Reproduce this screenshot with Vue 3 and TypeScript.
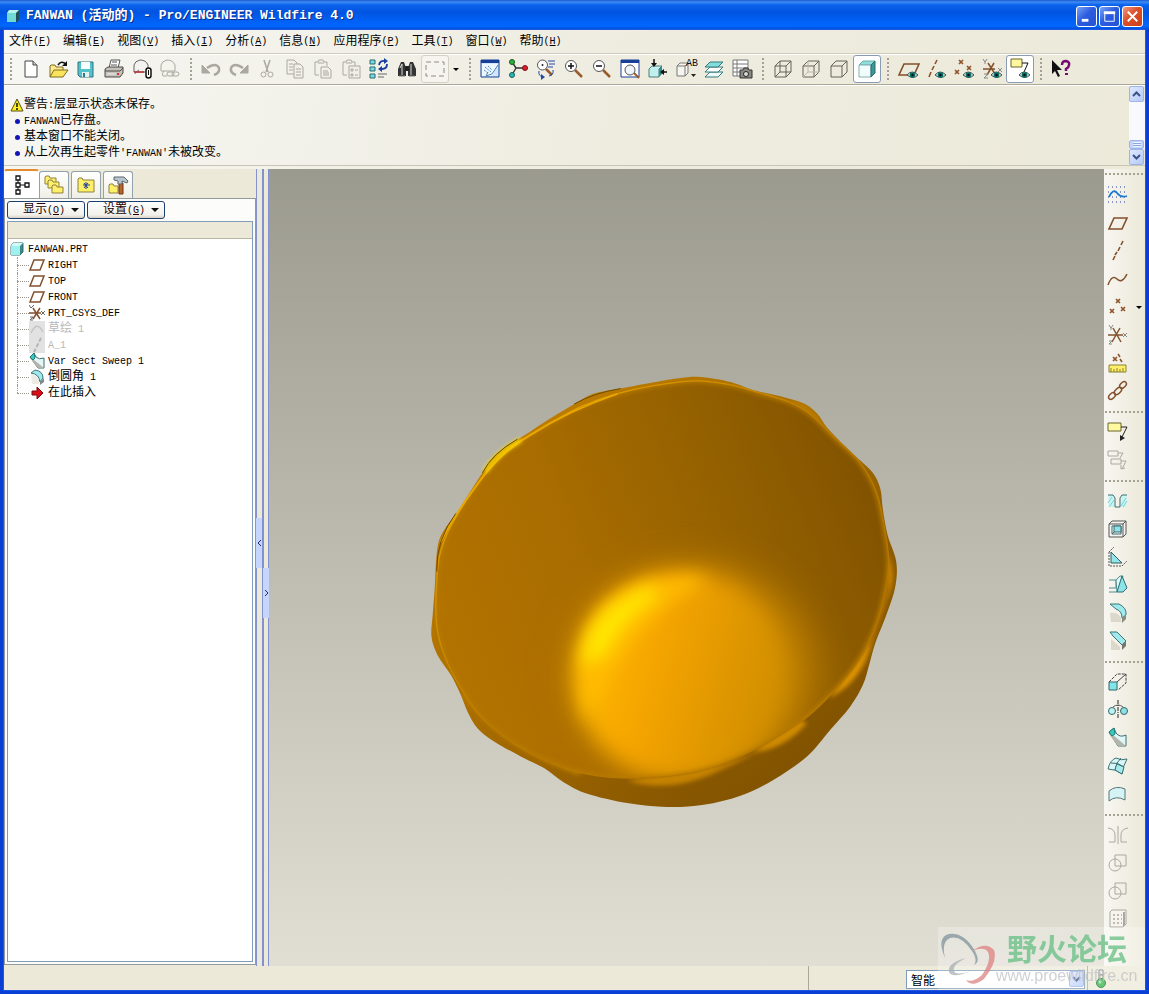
<script setup lang="ts">
import { h, ref } from 'vue'

type Run = { text: string; latin: boolean }
type Tool = { icon: string; label: string; state?: 'on' | 'off' }
type Point = [number, number]

const splitRuns = (text: string): Run[] =>
  (text.match(/[\x20-\x7e]+|[^\x20-\x7e]+/g) ?? []).map((t) => ({ text: t, latin: /^[\x20-\x7e]/.test(t) }))

const Mixed = (props: { text: string }) =>
  h('span', { class: 'mixed' }, splitRuns(props.text).map((r) => h('span', { class: r.latin ? 'latin' : 'han' }, r.text)))
Mixed.props = ['text']

const menus = [
  ['文件', 'F'], ['编辑', 'E'], ['视图', 'V'], ['插入', 'I'], ['分析', 'A'],
  ['信息', 'N'], ['应用程序', 'P'], ['工具', 'T'], ['窗口', 'W'], ['帮助', 'H'],
]

const messages = ['警告:层显示状态未保存。', 'FANWAN已存盘。', '基本窗口不能关闭。', "从上次再生起零件'FANWAN'未被改变。"]

const tree = [
  { icon: 'tPlane', name: 'RIGHT' },
  { icon: 'tPlane', name: 'TOP' },
  { icon: 'tPlane', name: 'FRONT' },
  { icon: 'tCsys', name: 'PRT_CSYS_DEF' },
  { icon: 'tCurve', name: '草绘 1', dim: true },
  { icon: 'tAxis', name: 'A_1', dim: true },
  { icon: 'tSweep', name: 'Var Sect Sweep 1' },
  { icon: 'tRound', name: '倒圆角 1' },
  { icon: 'tInsert', name: '在此插入' },
]

const topGroups: Tool[][] = [
  [
    { icon: 'new', label: '新建' }, { icon: 'open', label: '打开' }, { icon: 'save', label: '保存' },
    { icon: 'print', label: '打印' }, { icon: 'mail', label: '发送邮件' }, { icon: 'mailLink', label: '发送链接', state: 'off' },
  ],
  [
    { icon: 'undo', label: '撤消', state: 'off' }, { icon: 'redo', label: '重做', state: 'off' }, { icon: 'cut', label: '剪切', state: 'off' },
    { icon: 'copy', label: '复制', state: 'off' }, { icon: 'paste', label: '粘贴', state: 'off' }, { icon: 'pasteSpecial', label: '选择性粘贴', state: 'off' },
    { icon: 'regen', label: '再生' }, { icon: 'find', label: '查找' }, { icon: 'box', label: '选取框', state: 'off' },
  ],
  [
    { icon: 'repaint', label: '重画' }, { icon: 'spin', label: '旋转中心' }, { icon: 'orient', label: '定向模式' },
    { icon: 'zoomIn', label: '放大' }, { icon: 'zoomOut', label: '缩小' }, { icon: 'refit', label: '重新调整' },
    { icon: 'reorient', label: '重定向' }, { icon: 'views', label: '已命名视图' }, { icon: 'layers', label: '层' }, { icon: 'viewMgr', label: '视图管理器' },
  ],
  [
    { icon: 'wire', label: '线框' }, { icon: 'hidden', label: '隐藏线' }, { icon: 'noHidden', label: '无隐藏线' }, { icon: 'shade', label: '着色', state: 'on' },
  ],
  [
    { icon: 'planeEye', label: '基准平面显示' }, { icon: 'axisEye', label: '基准轴显示' }, { icon: 'pointEye', label: '基准点显示' },
    { icon: 'csysEye', label: '坐标系显示' }, { icon: 'noteEye', label: '注释显示', state: 'on' },
  ],
  [{ icon: 'help', label: '上下文帮助' }],
]

const sideGroups: Tool[][] = [
  [
    { icon: 'sketch', label: '草绘' }, { icon: 'plane', label: '平面' }, { icon: 'axis', label: '轴' }, { icon: 'curve', label: '曲线' },
    { icon: 'points', label: '点' }, { icon: 'csys', label: '坐标系' }, { icon: 'analysis', label: '分析特征' }, { icon: 'chain', label: '参照' },
  ],
  [{ icon: 'note', label: '注释' }, { icon: 'noteProp', label: '传播注释', state: 'off' }],
  [
    { icon: 'hole', label: '孔' }, { icon: 'shell', label: '壳' }, { icon: 'rib', label: '筋' },
    { icon: 'draft', label: '拔模' }, { icon: 'round', label: '倒圆角' }, { icon: 'chamfer', label: '倒角' },
  ],
  [
    { icon: 'extrude', label: '拉伸' }, { icon: 'revolve', label: '旋转' }, { icon: 'sweep', label: '可变截面扫描' },
    { icon: 'blend', label: '边界混合' }, { icon: 'style', label: '造型' },
  ],
  [
    { icon: 'mirror', label: '镜像', state: 'off' }, { icon: 'merge', label: '合并', state: 'off' },
    { icon: 'trim', label: '修剪', state: 'off' }, { icon: 'pattern', label: '阵列', state: 'off' },
  ],
]

const eye = '<path d="M11 18q5-6 11 0q-5 5-11 0z" fill="#cfe3dc" stroke="#34564e"/><circle cx="16.500" cy="18" r="2.800" fill="#0b6b62"/><circle cx="16.500" cy="18" r="1.200" fill="#012"/>'
const cube = '<path d="M4 9h11v11H4zM4 9l5-5h11v11l-5 5M15 9l5-5" fill="none" stroke="#666257"/>'
const clip = '<path d="M4 5h3l1-2h4l1 2h3v4M4 5v13h4"/><path d="M7 6h6"/>'
const lens = '<path d="M13 13l7 7" stroke="#9a5b2a" stroke-width="2.500"/><circle cx="9" cy="9" r="5.500" fill="#fff" stroke="#555"/>'
const planeShape = '<path d="M8 7h15l-5 11H3z" fill="none" stroke="#83502c" stroke-width="1.600"/>'
const cross = (x: number, y: number) => `<path d="M${x - 2} ${y - 2}l4 4m0-4l-4 4" stroke="#8f5127" stroke-width="1.600"/>`
const folder = (x: number, y: number, w = 11, t = 8) =>
  `<path d="M${x} ${y + t}V${y + 1}l1-1h3l1 2h${w - 5}v${t - 2}z" fill="#fff06a" stroke="#8e8140"/>`

const icons: Record<string, string> = {
  new: '<path d="M7 4h8l4 4v12H7z" fill="#fff" stroke="#444"/><path d="M15 4v4h4" fill="#ccc" stroke="#444"/>',
  open: '<path d="M4 20V9l1-1h4l1 2h7v3" fill="#ffe98a" stroke="#7c6d22"/><path d="M4 20l4-7h14l-5 7z" fill="#fbe45c" stroke="#7c6d22"/><path d="M12 8q3-5 8-1" fill="none" stroke="#111" stroke-width="1.500"/><path d="M21 4v5h-5z" fill="#111"/>',
  save: '<path d="M4 5h15v15H6l-2-2z" fill="#52c3cc" stroke="#30737c"/><path d="M7 5h9v7H7z" fill="#f8fdfd"/><path d="M8 15h7v5H8z" fill="#e7eeee"/><path d="M9 16h2v4H9z" fill="#287b86"/>',
  print: '<path d="M7 11l2-8h9l-2 8z" fill="#fff" stroke="#555"/><path d="M10 5h5M9 8h6" stroke="#555"/><path d="M3 12l3-2h15v6l-3 4H3z" fill="#c4c1ba" stroke="#4c4a45"/><path d="M5 17h9" stroke="#eee"/><path d="M15 17h2" stroke="#d32" stroke-width="2"/><path d="M3 14h15l3-3" fill="none" stroke="#4c4a45"/>',
  mail: '<path d="M4 15V8q1-4 6-5 6 0 8 5v7z" fill="#f4f2f1" stroke="#666"/><path d="M9 13q-4 2-4 4" stroke="#777" fill="none"/><path d="M4 15h10" stroke="#b33" stroke-width="1.500"/><rect x="16" y="11" width="5" height="10" rx="2.500" fill="#fff" stroke="#111" stroke-width="1.500"/><path d="M18.500 13v5" stroke="#111"/>',
  mailLink: '<path d="M3 14V8q1-4 6-5 6 0 8 5v6z"/><path d="M6 14q-3 3-1 5h4"/><rect x="9" y="15" width="7" height="4" rx="2"/><rect x="14" y="15" width="7" height="4" rx="2"/>',
  undo: '<path d="M8 11q9-6 12 0 1 5-5 7" stroke-width="2.500"/><path d="M3 8v8h8z" fill="#aaa8a0"/>',
  redo: '<path d="M16 11q-9-6-12 0-1 5 5 7" stroke-width="2.500"/><path d="M21 8v8h-8z" fill="#aaa8a0"/>',
  cut: '<path d="M9 3l4 12M15 3l-4 12" stroke-width="1.500"/><circle cx="8.500" cy="17.500" r="2.500"/><circle cx="15.500" cy="17.500" r="2.500"/>',
  copy: '<path d="M4 3h7l3 3v11H4zM6 7h4M6 10h4M6 13h4"/><path d="M11 7h6l3 3v11h-9z" fill="#f1efe6"/><path d="M13 12h5M13 15h5M13 18h5"/>',
  paste: `${clip}<path d="M10 10h7l3 3v8H10z" fill="#f1efe6"/><path d="M12 14h5M12 16h6M12 18h6"/>`,
  pasteSpecial: `${clip}<path d="M10 9h11v12H10z" fill="#f1efe6"/><path d="M12 12h2v2h-2zM16 13h3M12 17h2v2h-2zM16 18h3"/>`,
  regen: '<path d="M3 3h5v4H3zM3 10h5v4H3zM3 17h5v4H3z" fill="#7fd8da" stroke="#256d72"/><path d="M12 8q1-5 6-4M20 7q0 5-5 5" fill="none" stroke="#1b3fa0" stroke-width="1.800"/><path d="M17 1l4 3-4 3zM15 9v6l-4-3z" fill="#1b3fa0"/><path d="M11 17h9M11 20h6" stroke="#666"/>',
  find: '<path d="M3 19v-7l3-7h3l2 6v8zM13 19v-8l2-6h3l3 7v7z" fill="#333"/><path d="M10 9h4v5h-4z" fill="#222"/><path d="M5 11l2-4v11M16 7v11" stroke="#ddd" fill="none"/><path d="M4 19h6M14 19h6" stroke="#777"/>',
  box: '<path d="M3 5h18v14H3z" stroke="#8d8a80" stroke-dasharray="5 3"/>',
  repaint: '<path d="M3 3h18v17H3z" fill="#cfe8ff" stroke="#163f97"/><path d="M3 3h18v3H3z" fill="#163f97"/><path d="M4 7h16L14 19H4z" fill="#edf7ff"/><path d="M20 8l-6 9-6 2 2-4" fill="none" stroke="#5184b4"/><path d="M7 10l6 5M6 13l4 3M10 9l4 4" stroke="#4d87bb" stroke-dasharray="2 1"/>',
  spin: '<path d="M6 5l4 6h9M10 11l-4 7" stroke="#333" fill="none" stroke-width="1.400"/><circle cx="6" cy="5" r="2.500" fill="#2eae3b" stroke="#165a1d"/><circle cx="19" cy="11" r="2.500" fill="#d8222b" stroke="#7d0e13"/><circle cx="6" cy="18" r="2.500" fill="#2bb7b1" stroke="#12625f"/>',
  orient: '<path d="M12 12l6 6" stroke="#9a5b2a" stroke-width="2.500"/><circle cx="8.500" cy="8" r="5" fill="#fff" stroke="#555"/><circle cx="8.500" cy="8" r="1" fill="#222"/><path d="M14 4h7M15 7h6M14 10h5M5 14q-1 5 4 6M15 19q5-1 4-6" stroke="#2348a6" fill="none"/><path d="M7 17l4 3-4 3z" fill="#2348a6"/>',
  zoomIn: `${lens}<path d="M6 9h6M9 6v6" stroke="#111" stroke-width="1.500"/>`,
  zoomOut: `${lens}<path d="M6 9h6" stroke="#111" stroke-width="1.500"/>`,
  refit: '<path d="M3 3h18v17H3z" fill="#fff" stroke="#163f97"/><path d="M3 3h18v3H3z" fill="#163f97"/><path d="M16 16l5 5" stroke="#9a5b2a" stroke-width="2"/><circle cx="12" cy="13" r="5" fill="#eef6fb" stroke="#555"/>',
  reorient: '<path d="M3 12l3-3h10l-3 3v8H3z" fill="#bff0ee" stroke="#4e7d7d"/><path d="M13 12l3-3v8l-3 3z" fill="#2c8d92"/><path d="M8 2v5M21 15h-5" stroke="#111" stroke-width="1.500"/><path d="M5 6h6l-3 4zM18 12v6l-4-3z" fill="#111"/>',
  views: '<path d="M3 9l3-3h8v10l-3 3H3z" fill="#f6f5ef" stroke="#777"/><path d="M3 9h8v10M11 9l3-3" stroke="#777" fill="none"/><text x="12" y="9" font-family="Liberation Mono" font-size="10" fill="#111">AB</text><path d="M17 17h5l-2.500 3z" fill="#222"/>',
  layers: '<path d="M3 20l5-5h13l-5 5z" fill="#eefafa" stroke="#33797b"/><path d="M3 15l5-5h13l-5 5z" fill="#fff" stroke="#33797b"/><path d="M3 10l5-5h13l-5 5z" fill="#83dcdd" stroke="#33797b"/>',
  viewMgr: '<path d="M3 3h15v16H3zM3 7h15M3 11h15M3 15h15M7 3v16" fill="#fff" stroke="#777"/><path d="M10 13h3l1-2h4l1 2h3v8H10z" fill="#8b8882" stroke="#333"/><circle cx="16" cy="17" r="2.500" fill="#ddd" stroke="#222"/>',
  wire: `${cube}<path d="M9 4v11h11M9 15l-5 5" fill="none" stroke="#666257"/>`,
  hidden: `${cube}<path d="M9 4v11h11M9 15l-5 5" fill="none" stroke="#bbb8ac"/>`,
  noHidden: cube,
  shade: '<path d="M4 8l4-4h12l-4 4z" fill="#8fdedc" stroke="#66adad"/><path d="M4 8h12v12H4z" fill="#f1fdfc" stroke="#84b0b0"/><path d="M16 8l4-4v12l-4 4z" fill="#3c9699" stroke="#286d70"/>',
  planeEye: planeShape + eye,
  axisEye: `<path d="M13 3l-2 4M10 9l-2 4M7 15l-2 5" stroke="#8f5127" stroke-width="1.600"/>${eye}`,
  pointEye: cross(9, 5) + cross(5, 15) + cross(17, 11) + eye,
  csysEye: `<path d="M3 12h12M14 6L7 18M8 6l7 11" stroke="#83502c" stroke-width="1.500"/><path d="M3 2l2 3 2-3M5 5v2M4 17h4l-4 4h4M18 11l4 4m0-4l-4 4" stroke="#888" fill="none"/>${eye}`,
  noteEye: `<path d="M3 2h11v8H3z" fill="#fff6a0" stroke="#67642b"/><path d="M14 6h6l-4 9" fill="none" stroke="#111"/>${eye}`,
  help: '<path d="M3 3v14l3-3 3 6 2-1-3-6h5z" fill="#111"/><path d="M13 8q0-4 4-4 4 1 3 4 0 2-3 4v2" fill="none" stroke="#750b70" stroke-width="2.500"/><path d="M16 16h3v2h-3z" fill="#750b70"/>',
  sketch: '<path d="M2 4h19M2 9h19M2 14h19M2 19h19" stroke="#2338a0" stroke-dasharray="1 3"/><path d="M3 14q4-9 8-4 4 5 10 3" fill="none" stroke="#187bd1" stroke-width="1.800"/>',
  plane: '<path d="M8 7h13l-5 11H3z" fill="none" stroke="#83502c" stroke-width="1.600"/>',
  axis: '<path d="M17 2l-2 4M14 8l-2 4M11 13l-2 3M9 17l-2 4" stroke="#83502c" stroke-width="1.600"/>',
  curve: '<path d="M2 18q4-11 9-6t10-5" fill="none" stroke="#83502c" stroke-width="1.500"/>',
  points: cross(12, 6) + cross(6, 16) + cross(17, 14),
  csys: '<path d="M2 12h15M14 5L6 19M7 5l8 14" stroke="#83502c" stroke-width="1.500"/><path d="M3 2l2 3 2-3M5 5v2M3 18h3l-3 3h3M17 10l4 4m0-4l-4 4" stroke="#888" fill="none"/>',
  analysis: `${cross(9, 8)}<path d="M12 3l2 3M14 8l2 3" stroke="#83502c" stroke-width="1.500"/><path d="M3 14h17v7H3z" fill="#fff06a" stroke="#8c8030"/><path d="M5 21v-4M8 21v-3M11 21v-4M14 21v-3M17 21v-4" stroke="#8c8030"/>`,
  chain: '<g fill="none" stroke="#83502c" stroke-width="1.500"><ellipse cx="6" cy="17" rx="4" ry="2.500" transform="rotate(-45 6 17)"/><ellipse cx="12" cy="12" rx="4.500" ry="2.500" transform="rotate(-45 12 12)"/><ellipse cx="17" cy="6" rx="4" ry="2.500" transform="rotate(-45 17 6)"/></g>',
  note: '<path d="M2 3h13v8H2z" fill="#fff9a0" stroke="#67642b"/><path d="M15 7h6l-6 12" fill="none" stroke="#222"/><path d="M14 15v6l5-3z" fill="#222"/>',
  noteProp: '<path d="M2 3h10v5H2zM12 5h5l-3 5M5 11h10v5H5zM15 13h5l-4 8M15 17v4l4-1"/>',
  hole: '<path d="M2 6h5l2 12H3zM21 6h-5l-2 12h6z" fill="#c9f4f4"/><path d="M2 6h5l2 3v9h5V9l2-3h5" fill="none" stroke="#416c70"/><path d="M2 14l4-6M3 18l5-7M15 17l5-8M17 18l4-6" stroke="#6fd6dc"/>',
  shell: '<path d="M3 7l3-3h14v13l-3 3H3z" fill="#f4f4f0" stroke="#555"/><path d="M3 7h14v13M17 7l3-3" fill="none" stroke="#555"/><path d="M6 9h9v8H6z" fill="#fff" stroke="#39666a"/><path d="M8 9h7v6H8z" fill="#8ce4e8" stroke="#39666a"/><path d="M6 17l2-2" stroke="#39666a"/>',
  rib: '<path d="M5 7v11h11z" fill="#92e5e8" stroke="#2f5f63"/><path d="M3 7v14h13M3 7l5-5M16 21l5-5" fill="none" stroke="#555" stroke-dasharray="2 1"/>',
  draft: '<path d="M3 7h7v8H3M3 19h8" fill="none" stroke="#4c8d90"/><path d="M10 7l4-4h3l-6 16z" fill="#def8f8" stroke="#4c8d90"/><path d="M11 19l5-16 5 12-4 4z" fill="#8ce4e8" stroke="#2f6c70"/>',
  round: '<path d="M4 3h9q8 4 7 11l-4 3q0-7-6-9z" fill="#9de9ec" stroke="#3f7478"/><path d="M16 17l4-3v4l-4 4z" fill="#8a8a80"/><path d="M4 12q8-1 11 5v4H5z" fill="#dcd8cb"/>',
  chamfer: '<path d="M4 3h7l9 9-4 4-9-9z" fill="#9de9ec" stroke="#3f7478"/><path d="M16 16l4-4v5l-4 4z" fill="#77776e"/><path d="M5 10l9 8v3H5z" fill="#dcd8cb"/>',
  extrude: '<path d="M3 12h8v8H3z" fill="#7fe5e8" stroke="#39666a"/><path d="M3 12l8-8h9v9l-8 7" fill="none" stroke="#444" stroke-dasharray="3 1"/><path d="M11 12l9-8" stroke="#444"/>',
  revolve: '<circle cx="6" cy="13" r="3.500" fill="#baf1f2" stroke="#39666a"/><circle cx="18" cy="13" r="3.500" fill="#8be0e4" stroke="#39666a"/><path d="M7 9q5-4 10 0" fill="none" stroke="#555"/><path d="M12 2v19" stroke="#222" stroke-dasharray="4 1 1 1"/>',
  sweep: '<path d="M3 6l5-4 2 5q4 5 10 2v11h-8z" fill="#dff7f7" stroke="#3c7174"/><path d="M3 8l4 1 13 11h-8z" fill="#b3b5ac"/><path d="M3 6l5-4 1 6-3 2z" fill="#39cbc2" stroke="#1d7c76"/>',
  blend: '<path d="M2 15q2-9 8-11 5 3 11 1-4 7-5 15-6-5-14-5z" fill="#d8f6f7" stroke="#3c7174"/><path d="M9 16q1-8 6-12M5 9q7-1 13 4" fill="none" stroke="#3c7174"/><path d="M9 16q1-4 2-6l7 3-2 7z" fill="#a5eaed" stroke="#3c7174"/>',
  style: '<path d="M3 19V9q7-6 16-2v11q-9-5-16 1z" fill="#d5f3f4" stroke="#55777a"/>',
  mirror: '<path d="M12 3v18M2 5q7 1 7 7v7H3M22 5q-7 1-7 7v7h6"/>',
  merge: '<circle cx="9" cy="14" r="6"/><path d="M9 4h11v11H9z"/>',
  trim: '<circle cx="9" cy="14" r="6"/><path d="M9 4h11v11H9z"/>',
  pattern: '<path d="M4 5l2-2h14v14l-3 3H4z" fill="#f6f4ec"/><path d="M18 5v14" stroke-width="2"/><path d="M7 8h9M7 12h9M7 16h9" stroke-width="1.500" stroke-dasharray="2 2"/>',
}

const treeIcons: Record<string, string> = {
  tPlane: '<path d="M5 3h10l-4 10H1z" fill="none" stroke="#83502c" stroke-width="1.500"/>',
  tCsys: '<path d="M0 8h12M11 3L4 14M4 3l7 11" stroke="#83502c" stroke-width="1.500"/><path d="M0 0l2 3 3-3M1 12h3l-3 3h3M12 6l4 4m0-4l-4 4" stroke="#666" fill="none"/>',
  tCurve: '<path d="M0 0h16v16H0z" fill="#e2e2e2"/><path d="M2 12q6-13 12-1" fill="none" stroke="#c4c4c4" stroke-width="1.500"/>',
  tAxis: '<path d="M0 0h16v16H0z" fill="#e2e2e2"/><path d="M12 1L5 15" stroke="#b6b6b6" stroke-width="2" stroke-dasharray="4 2"/>',
  tSweep: '<path d="M1 4l4-4 2 4q3 3 8 1v10H9z" fill="#e3f7f7" stroke="#3c7174"/><path d="M1 5l3 1 11 9H9z" fill="#b3b5ac"/><path d="M1 4l4-4 1 5-2 2z" fill="#39cbc2" stroke="#1d7c76"/>',
  tRound: '<path d="M2 4l4-3q8 1 8 8l-3 4q-1-8-9-9z" fill="#9de9ec" stroke="#3f7478"/><path d="M11 13l4-4v4l-4 3z" fill="#888"/><path d="M2 5q7 1 8 8v2H3z" fill="#ecebe5"/>',
  tInsert: '<path d="M3 6h5V2l6 6-6 6v-4H3z" fill="#d80f18" stroke="#7b0a0e"/>',
}

const tabs = [
  { label: '模型树', art: '<path d="M5 2h4v4H5zM5 9h4v4H5zM5 16h4v4H5zM14 9h4v4h-4z" fill="#fff" stroke="#111" stroke-width="1.300"/><path d="M7 6v3M7 13v3M9 11h5" stroke="#111"/>' },
  { label: '文件夹浏览器', art: folder(2, 2) + folder(5, 6) + folder(9, 11) },
  { label: '收藏夹', art: `${folder(3, 4, 16, 14)}<path d="M11 8v7M8 11h7M9 9l4 5M13 9l-4 5" stroke="#1c3e9c"/>` },
  { label: '连接', art: `${folder(2, 10, 9, 9)}<path d="M12 9h4v11h-4z" fill="#b8652c" stroke="#6f3712"/><path d="M7 3h10l4 4-1 2-5-2v3h-4V7L7 6z" fill="#b9c6cc" stroke="#5c686e"/>` },
]

// Closed Catmull-Rom curve through the given points.
function closedCurve(points: Point[]): string {
  const n = points.length
  const at = (i: number) => points[(i + n) % n]
  let d = `M${at(0)[0]} ${at(0)[1]}`
  for (let i = 0; i < n; i++) {
    const [a, b, c, e] = [at(i - 1), at(i), at(i + 1), at(i + 2)]
    d += `C${b[0] + (c[0] - a[0]) / 6} ${b[1] + (c[1] - a[1]) / 6} ${c[0] - (e[0] - b[0]) / 6} ${c[1] - (e[1] - b[1]) / 6} ${c[0]} ${c[1]}`
  }
  return d + 'Z'
}

const outer = closedCurve([
  [840, 50], [930, 65], [1000, 90], [1080, 108], [1150, 130], [1190, 160], [1225, 208], [1300, 283], [1355, 335], [1380, 385],
  [1388, 450], [1402, 525], [1428, 605], [1425, 680], [1400, 760], [1365, 850], [1348, 910], [1328, 975], [1290, 1040], [1230, 1110],
  [1160, 1190], [1060, 1260], [960, 1308], [850, 1335], [740, 1342], [620, 1330], [500, 1302], [430, 1268], [370, 1225], [300, 1190],
  [220, 1145], [170, 1105], [140, 1055], [120, 1005], [90, 945], [50, 885], [32, 830], [36, 760], [42, 680], [46, 600],
  [55, 540], [80, 495], [108, 460], [145, 400], [185, 338], [215, 292], [260, 255], [310, 226], [380, 180], [460, 132],
  [520, 100], [600, 85], [700, 66], [780, 53],
])
const inner = closedCurve([
  [830, 62], [930, 74], [1010, 96], [1100, 123], [1170, 162], [1240, 230], [1320, 308], [1368, 395], [1392, 500], [1405, 600],
  [1394, 700], [1360, 815], [1310, 910], [1240, 995], [1150, 1080], [1020, 1160], [900, 1215], [780, 1245], [640, 1255], [500, 1243],
  [380, 1205], [270, 1145], [180, 1070], [120, 985], [72, 890], [48, 800], [46, 700], [54, 600], [75, 530], [109, 465],
  [150, 400], [200, 332], [250, 278], [312, 234], [400, 182], [480, 139], [580, 103], [700, 76],
])

const filter = ref('智能')
</script>

<template>
  <div class="window">
    <header class="title-bar">
      <svg class="app-icon" viewBox="0 0 14 14"><path d="M1 3l2-2h10v10l-2 2H1z" fill="#1e4c58" /><path d="M1 4h9v9H1z" fill="#6fd9d4" /><path d="M1 4l2-3h10l-3 3z" fill="#b5f3ef" /></svg>
      <h1>FANWAN (<span class="han">活动的</span>) - Pro/ENGINEER Wildfire 4.0</h1>
      <div class="caption">
        <button type="button" aria-label="最小化"><svg viewBox="0 0 20 20"><path d="M5 14h7" stroke="#fff" stroke-width="3" /></svg></button>
        <button type="button" aria-label="最大化"><svg viewBox="0 0 20 20"><path d="M5 6h10v9H5z" fill="none" stroke="#fff" /><path d="M4 6h12" stroke="#fff" stroke-width="3" /></svg></button>
        <button type="button" aria-label="关闭" class="close"><svg viewBox="0 0 20 20"><path d="M5 5l10 10M15 5L5 15" stroke="#fff" stroke-width="2" /></svg></button>
      </div>
    </header>

    <div class="client">
      <nav class="menu-bar">
        <button v-for="[name, key] in menus" :key="key" type="button">{{ name }}<span class="latin">(<u>{{ key }}</u>)</span></button>
      </nav>

      <div class="tool-bar" role="toolbar">
        <template v-for="(group, g) in topGroups" :key="g">
          <i class="grip"></i>
          <button v-for="tool in group" :key="tool.icon" type="button" class="tool" :class="[tool.state, tool.icon]" :aria-label="tool.label">
            <svg viewBox="0 0 24 24" v-html="icons[tool.icon]"></svg>
          </button>
          <button v-if="g === 1" type="button" class="more" aria-label="选取选项"></button>
        </template>
      </div>

      <section class="messages">
        <ul>
          <li v-for="(message, i) in messages" :key="message">
            <svg v-if="i === 0" class="warn" viewBox="0 0 14 14"><path d="M7 1l6 12H1z" fill="#ffef1f" stroke="#55500c" stroke-linejoin="round" /><path d="M7 5v4M7 10v2" stroke="#111" stroke-width="1.500" /></svg>
            <i v-else class="dot"></i>
            <Mixed :text="message" />
          </li>
        </ul>
        <div class="scroll">
          <button type="button" aria-label="向上滚动"><svg viewBox="0 0 9 6"><path d="M1 5l3.500-3.500L8 5" /></svg></button>
          <span class="track"><i class="thumb"></i></span>
          <button type="button" aria-label="向下滚动"><svg viewBox="0 0 9 6"><path d="M1 1l3.500 3.500L8 1" /></svg></button>
        </div>
      </section>

      <main class="work">
        <aside class="navigator">
          <div class="tabs" role="tablist">
            <button v-for="(tab, i) in tabs" :key="tab.label" type="button" role="tab" :aria-label="tab.label" :class="{ current: i === 0 }">
              <svg viewBox="0 0 22 22" v-html="tab.art"></svg>
            </button>
          </div>
          <div class="page">
            <div class="page-buttons">
              <button type="button">显示<span class="latin">(<u>O</u>)</span><i></i></button>
              <button type="button">设置<span class="latin">(<u>G</u>)</span><i></i></button>
            </div>
            <div class="tree-box">
              <div class="tree-head"></div>
              <div class="root">
                <svg viewBox="0 0 14 14"><path d="M1 4l2-3h10v9l-3 3H1z" fill="#37878b" stroke="#3c7174" /><path d="M1 4h9v9H1z" fill="#9ff1ef" /><path d="M1 4l2-3h10l-3 3z" fill="#d2faf8" /></svg>
                <Mixed text="FANWAN.PRT" />
              </div>
              <ul class="tree">
                <li v-for="node in tree" :key="node.name" :class="{ dim: node.dim }">
                  <svg viewBox="0 0 16 16" v-html="treeIcons[node.icon]"></svg>
                  <Mixed :text="node.name" />
                </li>
              </ul>
            </div>
          </div>
        </aside>

        <div class="sash left"><button type="button" aria-label="折叠导航器"><svg viewBox="0 0 6 8"><path d="M4 1L1 4l3 3" /></svg></button></div>
        <div class="sash right"><button type="button" aria-label="展开浏览器"><svg viewBox="0 0 6 8"><path d="M2 1l3 3-3 3" /></svg></button></div>

        <section class="viewport">
          <svg viewBox="268 169 836 797" role="img" aria-label="FANWAN">
            <defs>
              <linearGradient id="wall" x1="0" y1=".65" x2="1" y2=".3">
                <stop offset="0" stop-color="#b37300" /><stop offset=".35" stop-color="#a86c00" /><stop offset=".7" stop-color="#936000" /><stop offset="1" stop-color="#815200" />
              </linearGradient>
              <linearGradient id="skin" x1="0" y1="0" x2="1" y2="1">
                <stop offset="0" stop-color="#c88400" /><stop offset=".45" stop-color="#a86c00" /><stop offset=".75" stop-color="#885700" /><stop offset="1" stop-color="#7a4e00" />
              </linearGradient>
              <linearGradient id="floor" x1="0" y1=".3" x2="1" y2=".55">
                <stop offset="0" stop-color="#ffbc00" /><stop offset=".35" stop-color="#f6a600" /><stop offset=".65" stop-color="#e39900" /><stop offset="1" stop-color="#cf8d00" />
              </linearGradient>
              <linearGradient id="rim" x1="0" y1="0" x2="1" y2="1">
                <stop offset="0" stop-color="#f3b000" /><stop offset=".5" stop-color="#b87a00" /><stop offset="1" stop-color="#b27500" />
              </linearGradient>
              <filter id="wide" x="-30%" y="-30%" width="160%" height="160%"><feGaussianBlur stdDeviation="50" /></filter>
              <filter id="soft" x="-30%" y="-30%" width="160%" height="160%"><feGaussianBlur stdDeviation="34" /></filter>
              <filter id="mid" x="-40%" y="-40%" width="180%" height="180%"><feGaussianBlur stdDeviation="24" /></filter>
              <filter id="fine" x="-30%" y="-30%" width="160%" height="160%"><feGaussianBlur stdDeviation="7" /></filter>
              <clipPath id="inside"><path :d="inner" /></clipPath>
              <clipPath id="body"><path :d="outer" /></clipPath>
            </defs>
            <g transform="translate(420 360) scale(.33333)">
              <path :d="outer" fill="url(#skin)" />
              <g clip-path="url(#body)">
                <g filter="url(#fine)">
                  <path d="M620 1262Q740 1300 870 1245Q960 1205 1010 1175L900 1215Z" fill="#c58200" />
                  <path d="M990 1180Q1090 1170 1160 1090L1140 1080Z" fill="#cf8a00" />
                  <path d="M1225 1015Q1310 975 1345 880L1365 820L1310 905Z" fill="#dc9200" />
                  <path d="M1400 590Q1430 650 1395 720L1350 850L1405 690Z" fill="#c68200" stroke="#c68200" stroke-width="8" />
                  <path d="M1110 115Q1170 130 1210 200L1250 240L1160 160Z" fill="#b87a00" stroke="#b87a00" stroke-width="8" />
                  <path d="M130 1000Q180 1070 260 1130Q340 1190 480 1240" fill="none" stroke="#bd7d00" stroke-width="16" />
                </g>
              </g>
              <path :d="inner" fill="url(#wall)" />
              <g clip-path="url(#inside)">
                <ellipse cx="810" cy="930" rx="380" ry="330" fill="#b87a00" filter="url(#wide)" />
                <ellipse cx="785" cy="950" rx="325" ry="315" fill="url(#floor)" filter="url(#soft)" />
                <path d="M500 1060Q450 780 640 690Q730 650 850 660Q640 750 500 1060Z" fill="#ffbb00" stroke="#ffbb00" stroke-width="16" filter="url(#mid)" />
                <path d="M505 890Q520 760 700 695Q590 770 545 870Z" fill="#ffe600" stroke="#ffe600" stroke-width="36" filter="url(#mid)" />
                <path :d="inner" fill="none" stroke="#b87a00" stroke-width="12" filter="url(#fine)" />
              </g>
              <path :d="inner" fill="none" stroke="url(#rim)" stroke-width="4" />
              <path d="M60 545Q100 465 190 346Q250 270 330 224Q450 148 590 101" fill="none" stroke="#e8a600" stroke-width="6" />
              <path d="M192 335Q230 275 300 240" fill="none" stroke="#ffe200" stroke-width="12" filter="url(#fine)" />
              <path d="M48 635Q45 540 105 460M185 338Q215 280 290 237M460 132Q520 98 600 85" fill="none" stroke="#6d4a00" stroke-width="3" />
            </g>
          </svg>
        </section>

        <div class="side-bar" role="toolbar">
          <template v-for="(group, g) in sideGroups" :key="g">
            <i class="grip"></i>
            <div v-for="tool in group" :key="tool.icon" class="side-row">
              <button type="button" class="tool" :class="tool.state" :aria-label="tool.label">
                <svg viewBox="0 0 24 24" v-html="icons[tool.icon]"></svg>
              </button>
              <button v-if="tool.icon === 'points'" type="button" class="more" aria-label="更多点工具"></button>
            </div>
          </template>
        </div>
      </main>

      <footer class="status">
        <div class="status-filter">
          <label>
            <select v-model="filter" aria-label="选取过滤器"><option>智能</option></select>
            <span class="drop"><svg viewBox="0 0 9 6"><path d="M1 1l3.500 3.500L8 1" /></svg></span>
          </label>
        </div>
        <div class="status-light">
          <svg viewBox="0 0 14 20"><path d="M5 1h4v5H5z" fill="#eee" stroke="#777" /><path d="M5 6h4v5H5z" fill="#e3efae" stroke="#777" /><circle cx="7" cy="14" r="4.500" fill="#37b34a" stroke="#1b6f2a" /><circle cx="6" cy="13" r="1.500" fill="#9fe3a8" /></svg>
        </div>
      </footer>
    </div>

    <div class="watermark">
      <svg viewBox="0 0 60 56">
        <path d="M7 29Q-2 8 11 5Q26 3 37 22Q43 33 36 36Q40 31 34 22Q23 6 12 9Q3 13 7 29Z" fill="#8a9ba5" />
        <path d="M34 22Q48 12 56 21Q60 33 46 50Q34 59 28 51Q35 54 44 46Q54 31 50 23Q46 17 34 22Z" fill="#e08a8a" />
        <path d="M28 29Q9 34 11 43Q14 50 33 42Q18 47 16 42Q14 36 28 29Z" fill="#aeb6ba" />
      </svg>
      <div><strong>野火论坛</strong><span>www.proewildfire.cn</span></div>
    </div>
  </div>
</template>

<style>
html, body { margin: 0; height: 100%; }
#app { height: 100%; }
.mixed { white-space: pre; }
.latin { font: 10px "Liberation Mono", monospace; color: inherit; }
</style>

<style scoped>
* { box-sizing: border-box; }
.window { position: relative; display: flex; flex-direction: column; min-height: 100vh; background: #0a3fd6; color: #000; font: 12px/16px "Liberation Mono", "Noto Sans CJK SC", monospace; overflow: hidden; }
button { margin: 0; padding: 0; border: 0; background: none; font: inherit; color: inherit; display: flex; align-items: center; justify-content: center; }
ul { list-style: none; margin: 0; padding: 0; }
svg { display: block; flex: none; }

.title-bar { display: flex; align-items: center; gap: 6px; height: 30px; padding: 2px 6px 0; background: linear-gradient(#1a55cf 0, #3b8df5 2px, #0a62ec 5px, #0054e0 12px, #0062f8 22px, #0067ff 26px, #0048c8 30px); }
.app-icon { width: 14px; height: 14px; }
.title-bar h1 { flex: 1; margin: 0; color: #fff; font: bold 13px/20px "Liberation Mono", "Noto Sans CJK SC", monospace; text-shadow: 1px 1px #0a2d86; }
.caption { display: flex; gap: 2px; }
.caption button { width: 21px; height: 21px; border: 1px solid #fff; border-radius: 3px; background: linear-gradient(135deg, #7ba4f5, #2c5de0 45%, #2452d4); }
.caption button svg { width: 19px; height: 19px; }
.caption .close { background: linear-gradient(135deg, #f09a80, #dd4f29 45%, #c9401c); }

.client { flex: 1; display: flex; flex-direction: column; margin: 0 4px 4px; background: linear-gradient(100deg, #f6f6f3, #eeecdf 50%, #ece9d8); box-shadow: 0 0 0 1px #1c57e8; }

.menu-bar { display: flex; gap: 12px; height: 23px; padding: 0 5px; }
.menu-bar button { line-height: 20px; white-space: nowrap; }
.menu-bar .latin { line-height: 20px; }

.tool-bar { display: flex; align-items: center; height: 32px; border-top: 1px solid #cfccbd; border-bottom: 1px solid #aca899; box-shadow: inset 0 1px #fff, 0 1px #fff; }
.grip { flex: none; }
.tool-bar .grip { width: 13px; height: 23px; background: repeating-linear-gradient(#a5a294 0 2px, transparent 2px 4px) 6px 0 / 2px 100% no-repeat; }
.tool-bar .grip:first-child { width: 12px; }
.tool { flex: none; width: 28px; height: 28px; border: 1px solid transparent; border-radius: 3px; }
.tool svg { width: 24px; height: 24px; fill: none; }
.tool.off svg { stroke: #aaa8a0; }
.tool.on { background: #fff; border-color: #8a9bb4; }
.tool.box { border-color: #d3d0c5; background: #f5f4ee; }
.more { flex: none; width: 14px; height: 28px; }
.more::after { content: ""; border: 3px solid transparent; border-top-color: #000; border-bottom: 0; }

.messages { display: flex; height: 81px; justify-content: space-between; padding-top: 1px; border-bottom: 1px solid #c9c5b4; }
.messages ul { padding: 11px 6px 0; }
.messages li { display: flex; align-items: center; height: 16px; }
.messages li > svg { width: 14px; height: 14px; }
.dot { width: 5px; height: 5px; margin: 0 4px 0 5px; border-radius: 50%; background: #1414b8; }
.scroll { display: flex; flex-direction: column; width: 16px; }
.scroll button, .drop { display: flex; align-items: center; justify-content: center; width: 15px; height: 16px; border: 1px solid #9db4ea; border-radius: 2px; background: linear-gradient(135deg, #dfe9ff, #b5c9f8); }
.scroll button svg, .drop svg { width: 9px; height: 6px; fill: none; stroke: #3a5487; stroke-width: 2; }
.track { flex: 1; display: flex; align-items: flex-end; background: #f8f8fd; }
.thumb { width: 15px; height: 9px; border: 1px solid #9db4ea; border-radius: 2px; background: repeating-linear-gradient(#eef3ff 0 1px, #8aa5e6 1px 2px) 3px 1px / 8px 5px no-repeat, #c3d3fb; }

.work { flex: 1; display: flex; margin-top: 3px; }
.navigator { display: flex; flex-direction: column; flex: 0 0 252px; padding-bottom: 1px; background: #ece9d8; }
.tabs { display: flex; align-items: flex-end; gap: 2px; height: 29px; }
.tabs button { width: 30px; height: 27px; border: 1px solid #91a1ad; border-bottom: 0; border-radius: 3px 3px 0 0; background: linear-gradient(#fff, #f0efe6); }
.tabs .current { width: 35px; height: 29px; margin-right: -2px; border-color: transparent; border-top: 2px solid #e68b2c; background: #fff; }
.tabs svg { width: 22px; height: 22px; }
.page { flex: 1; display: flex; flex-direction: column; padding: 2px; border: 1px solid #919b9c; background: #fcfcfb; }
.page-buttons { display: flex; gap: 2px; margin-bottom: 2px; }
.page-buttons button { width: 78px; height: 18px; padding-left: 10px; border: 1px solid #1d4073; border-radius: 3px; background: linear-gradient(#fff, #f1f0ea 80%, #d8d1c3); color: #200; }
.page-buttons i { margin-left: 6px; border: 4px solid transparent; border-top-color: #111; border-bottom: 0; }
.tree-box { flex: 1; border: 1px solid #7f9db9; background: #fff; }
.tree-head { height: 17px; border-bottom: 1px solid #b9b5a3; background: #ece9d8; }
.root { display: flex; align-items: center; gap: 4px; height: 16px; margin-top: 2px; padding-left: 2px; }
.root svg { width: 14px; height: 14px; }
.tree { padding-left: 9px; }
.tree li { display: flex; align-items: center; height: 16px; }
.tree li::before { content: ""; align-self: flex-start; width: 12px; height: 8px; border-bottom: 1px dotted #9b9788; }
.tree li::after { content: ""; order: -1; align-self: stretch; width: 0; margin-right: -1px; border-left: 1px dotted #9b9788; }
.tree li:last-child::after { align-self: flex-start; height: 8px; }
.tree li svg { width: 16px; height: 16px; margin-right: 3px; }
.tree .dim { color: #b8b8b8; }

.sash { display: flex; flex-direction: column; flex: 0 0 6px; border-left: 1px solid #8292d0; background: #ece9d8; }
.sash.left { justify-content: flex-start; }
.sash.left::before { content: ""; flex: 0 0 calc(50% - 50px); }
.sash.right::before { content: ""; flex: 0 0 50%; }
.sash.right { border-left: 2px solid #8292d0; border-right: 1px solid #8292d0; }
.sash button { flex: 0 0 50px; margin: 0 -1px; background: #c6d5fd; }
.sash svg { width: 6px; height: 8px; fill: none; stroke: #1d2c6b; stroke-width: 1; }

.viewport { flex: 1; position: relative; min-width: 0; background: linear-gradient(#9b9a8e, #bdbbb0 48%, #e1dfd4); }
.viewport svg { position: absolute; inset: 0; width: 100%; height: 100%; }

.side-bar { flex: 0 0 41px; background: linear-gradient(90deg, #f7f6f1, #ece9d8); }
.side-bar .grip { display: block; height: 13px; background: repeating-linear-gradient(90deg, #a5a294 0 2px, transparent 2px 4px) 1px 6px / 100% 2px no-repeat; }
.side-bar .grip:first-child { height: 12px; background-position: 1px 4px; }
.side-row { display: flex; }
.side-row .more { width: 13px; }

.status { display: flex; justify-content: flex-end; height: 24px; background: #ece9d8; }
.status-filter { display: flex; justify-content: flex-end; align-items: center; width: 280px; padding: 2px 2px 0 0; border-left: 1px solid #aca899; border-right: 1px solid #aca899; }
.status-filter label { display: flex; align-items: center; width: 179px; height: 19px; border: 1px solid #7f9db9; background: #fff; }
.status-filter select { flex: 1; min-width: 0; height: 17px; padding: 0 4px; border: 0; background: none; appearance: none; font: 12px/17px "Noto Sans CJK SC", sans-serif; color: #000; }
.status-light { display: flex; align-items: center; width: 57px; padding: 2px 0 0 6px; }
.status-light svg { width: 14px; height: 20px; }

.watermark { position: absolute; right: 4px; bottom: 4px; display: flex; width: 207px; height: 63px; background: rgba(255, 255, 255, .3); pointer-events: none; opacity: .8; }
.watermark svg { width: 60px; height: 60px; }
.watermark div { display: flex; flex-direction: column; }
.watermark strong { padding-left: 9px; font: bold 30px/40px "Noto Sans CJK SC", sans-serif; color: #6fc48c; white-space: nowrap; }
.watermark span { margin-left: -2px; font: 16px/18px "Liberation Sans", sans-serif; color: #c3c6c9; white-space: nowrap; }
</style>
